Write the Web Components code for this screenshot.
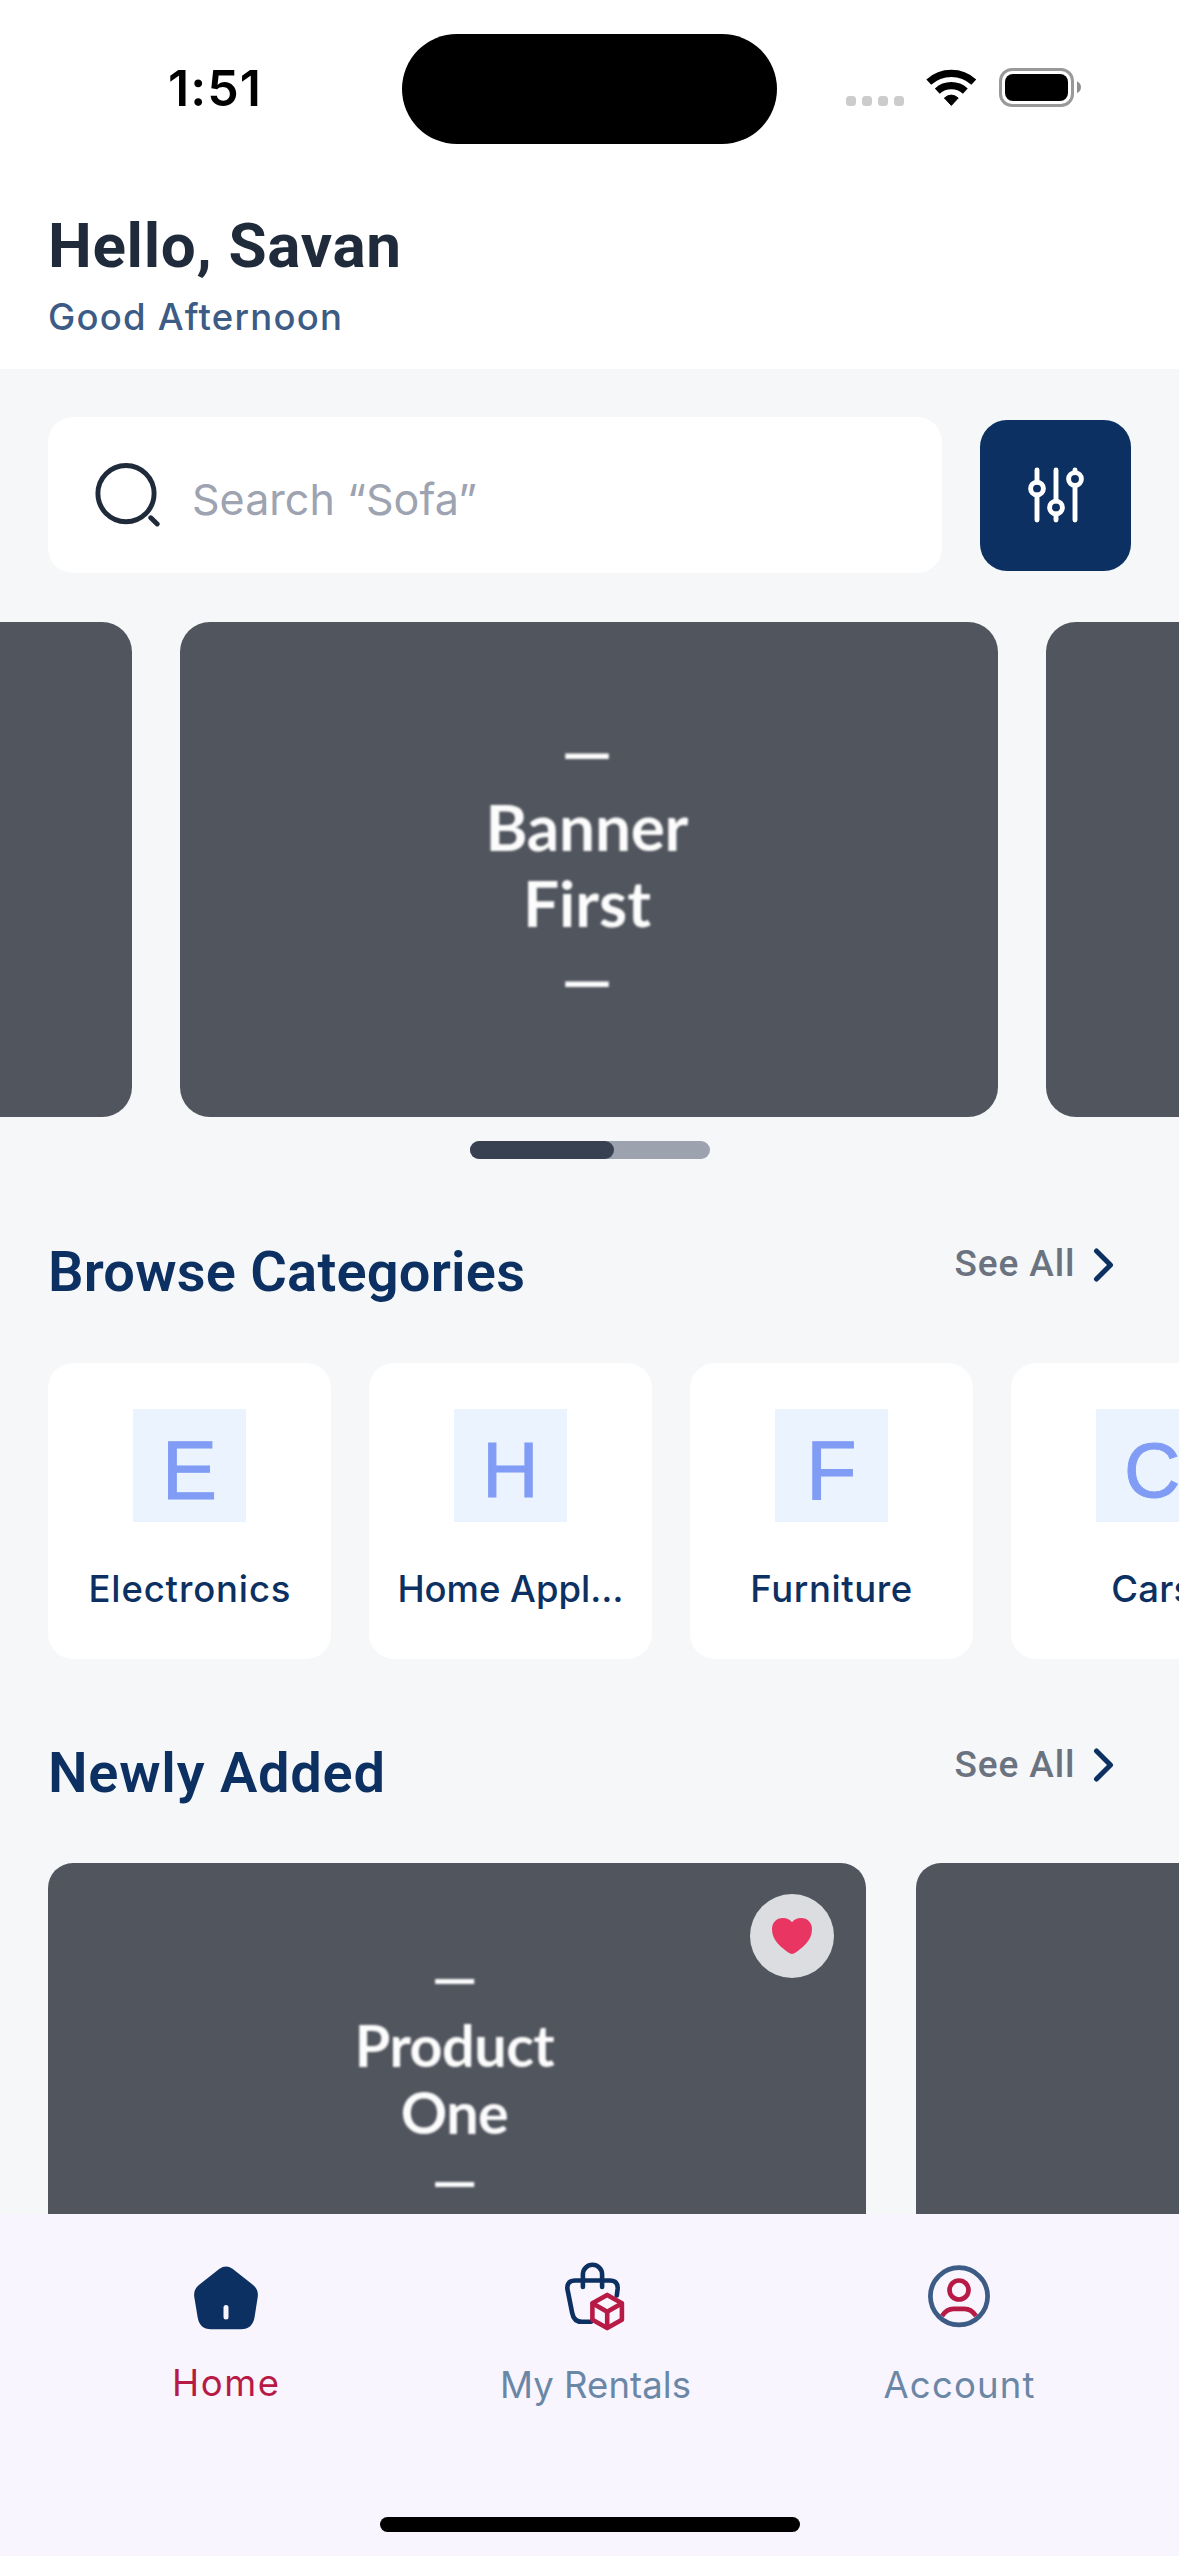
<!DOCTYPE html>
<html lang="en">
<head>
<meta charset="utf-8">
<title>Rentals</title>
<style>
html,body{margin:0;padding:0}
body{width:1179px;height:2556px;overflow:hidden;background:#f5f7f9;font-family:Inter,"Noto Sans",sans-serif}
</style>
</head>
<body>
<rental-app></rental-app>
<script>
function define(name, html, Base = HTMLElement) {
  const t = document.createElement('template');
  t.innerHTML = html;
  customElements.define(name, class extends Base {
    constructor() {
      super();
      this.attachShadow({mode: 'open'}).appendChild(t.content.cloneNode(true));
    }
  });
}

/* Single line of text tracked out to an exact width. */
customElements.define('fit-text', class extends HTMLElement {
  constructor() {
    super();
    this.attachShadow({mode: 'open'}).innerHTML = `
      <style>:host{display:block;white-space:nowrap}span{display:inline-block}</style><span><slot></slot></span>`;
  }
  connectedCallback() {
    requestAnimationFrame(() => this.fit());
    this.fit();
  }
  fit() {
    const w = +this.getAttribute('w');
    const span = this.shadowRoot.querySelector('span');
    const n = this.textContent.length;
    if (!w || n < 2) return;
    span.style.letterSpacing = '0px';
    span.style.marginRight = '0';
    const natural = span.getBoundingClientRect().width;
    if (!natural) return;
    const ls = (w - natural) / (n - 1);
    span.style.letterSpacing = ls + 'px';
    span.style.marginRight = -ls + 'px';
  }
});

define('status-bar', `
<style>
:host{display:grid;grid-template-columns:402px 375px 402px;height:177px;align-items:start;background:#fff}
.time{padding:58px 0 0 168px;font:600 50px/60px Inter,sans-serif;color:#000}
.island{margin-top:34px;height:110px;border-radius:55px;background:#000}
.icons{display:flex;padding:68px 0 0 69px;align-items:flex-start}
.dots{display:flex;gap:6px;padding-top:28px;margin-right:22px}
.dots i{width:10px;height:10px;border-radius:3.5px;background:#ccc}
svg{display:block}
.wifi{margin-right:22px}
</style>
<div class="time"><fit-text w="93">1:51</fit-text></div>
<div class="island"></div>
<div class="icons">
  <div class="dots"><i></i><i></i><i></i><i></i></div>
  <svg class="wifi" width="51" height="39" viewBox="0 0 51 39">
    <g fill="none" stroke="#000" stroke-width="7.2">
      <path d="M2.8 14.1A33.2 33.2 0 0 1 47.8 14.1"/>
      <path d="M11.3 23.1A20.8 20.8 0 0 1 39.3 23.1"/>
    </g>
    <path d="M18.4 30Q25.3 24.2 32.2 30L25.3 37.4Z" stroke="#000" stroke-width="1" stroke-linejoin="round"/>
  </svg>
  <svg width="83" height="39" viewBox="0 0 83 39">
    <rect x="1.5" y="1.5" width="72" height="36" rx="11.5" fill="none" stroke="#999" stroke-width="3"/>
    <rect x="6" y="6" width="63" height="27" rx="8" fill="#000"/>
    <path d="M78 13.3Q82 15.5 82 19.3Q82 23.1 78 25.3Z" fill="#8f8f8f"/>
  </svg>
</div>`);

define('greeting-header', `
<style>
:host{display:block;height:159px;padding:33px 48px 0;background:#fff}
.name{font:700 62px/72px Roboto,sans-serif;color:#1f2a3a}
.sub{margin-top:13px;font:500 36.5px/44px Inter,sans-serif;color:#3c5b85}
</style>
<div class="name"><fit-text w="353">Hello, Savan</fit-text></div>
<div class="sub"><fit-text w="294">Good Afternoon</fit-text></div>`);

define('search-bar', `
<style>
:host{display:flex;gap:38px;align-items:center;padding:48px 48px 0}
.box{display:flex;align-items:center;box-sizing:border-box;width:894px;height:156px;border-radius:25px;background:#fff;padding-left:46px}
.q{margin-left:32px;padding-top:7px;font:400 43px/52px Inter,sans-serif;color:#9da3b0}
.filter{width:151px;height:151px;border-radius:27px;background:#0c3061;display:flex;align-items:center;justify-content:center}
svg{display:block}
</style>
<div class="box">
  <svg width="66" height="66" viewBox="0 0 66 66" fill="none" stroke="#1f2a3a" stroke-width="4.9" stroke-linecap="round">
    <circle cx="32" cy="31.6" r="28.1"/><path d="M56.8 55.8L63.2 62"/>
  </svg>
  <div class="q"><fit-text w="285">Search “Sofa”</fit-text></div>
</div>
<div class="filter">
  <svg width="64" height="64" viewBox="0 0 64 64" fill="none" stroke="#fff" stroke-width="4.9" stroke-linecap="round">
    <path d="M13 7V19.2M13 32V57M32 7V38M32 51V57M51 7V9.6M51 22.4V57"/>
    <circle cx="13" cy="25.6" r="6.4"/><circle cx="32" cy="44.5" r="6.4"/><circle cx="51" cy="16" r="6.4"/>
  </svg>
</div>`);

define('photo-placeholder', `
<style>
:host{display:flex;flex:none;flex-direction:column;align-items:center;justify-content:center;background:#51555e;color:#fcfcfc;
font-family:Lato,sans-serif;font-weight:700;text-align:center}
div{display:flex;flex-direction:column;align-items:center;margin:-10px 0 0 -4px;filter:blur(.8px)}
</style>
<div><slot></slot></div>`);

define('banner-carousel', `
<style>
:host{display:block;padding-top:49.3px}
.track{display:flex;justify-content:center;gap:48px;margin-left:-1px}
photo-placeholder{width:818px;height:495px;border-radius:30px;font-size:64px;line-height:75.8px}
.pager{width:240px;height:18.5px;margin:23.6px auto 0;border-radius:10px;background:#9ca3af}
.pager i{display:block;width:144px;height:100%;border-radius:10px;background:#374151}
</style>
<div class="track">
  <photo-placeholder></photo-placeholder>
  <photo-placeholder><fit-text>—</fit-text><fit-text w="203">Banner</fit-text><fit-text w="128">First</fit-text><fit-text>—</fit-text></photo-placeholder>
  <photo-placeholder></photo-placeholder>
</div>
<div class="pager"><i></i></div>`);

define('section-header', `
<style>
:host{display:flex;justify-content:space-between;align-items:flex-start;height:66px;padding:0 65.500px 0 48px}
.title{font:560 56px/66px Roboto,sans-serif;color:#0c3061}
.all{display:flex;align-items:center;gap:17px;padding-top:3px;font:500 37px/44px Roboto,sans-serif;color:#6b7280}
svg{display:block;margin-top:1px}
</style>
<div class="title"><slot></slot></div>
<div class="all"><fit-text w="120">See All</fit-text>
  <svg width="22" height="36" viewBox="0 0 22 36" fill="none" stroke="#0c3061" stroke-width="5" stroke-linecap="round" stroke-linejoin="round"><path d="M4.5 4L18.5 18L4.5 32"/></svg>
</div>`);

define('category-card', `
<style>
:host{display:flex;flex:none;flex-direction:column;align-items:center;box-sizing:border-box;width:283px;height:296px;padding-top:46px;border-radius:25px;background:#fff}
.pic{display:flex;align-items:center;justify-content:center;width:113px;height:113px;background:#ebf3ff;color:#809cf5;font:400 var(--letter,83px)/113px "Liberation Sans",sans-serif}
.pic slot{display:block;padding-top:11px;-webkit-text-stroke:1px #809cf5}
.label{margin-top:45px;font:500 36.5px/44px Inter,sans-serif;color:#0c3061}
</style>
<div class="pic"><slot name="letter"></slot></div>
<div class="label"><slot></slot></div>`);

define('product-card', `
<style>
:host{display:block;flex:none;position:relative;width:817.500px;height:440px}
photo-placeholder{height:440px;border-radius:25px 25px 0 0;font-size:57.5px;line-height:67.5px}
.fav{position:absolute;top:31px;right:32px;width:84px;height:84px;border-radius:50%;background:#dcdde0;display:flex;align-items:center;justify-content:center}
svg{display:block}
</style>
<photo-placeholder><slot></slot></photo-placeholder>
<div class="fav"><svg width="42" height="38" viewBox="0 0 42 38"><path fill="#e83562" d="M21 5.2C23.4 2.2 26.6 1 30 1C36.6 1 41 5.8 41 12C41 24.500 31 30.500 24.600 35.600Q21 38.200 17.400 35.600C11 30.500 1 24.500 1 12C1 5.800 5.400 1 12 1C15.400 1 18.600 2.200 21 5.200Z"/></svg></div>`);

define('tab-item', `
<style>
:host{display:flex;flex-direction:column;align-items:center;flex:none;color:#6b87a6;font:400 36.5px/44px Inter,sans-serif}
.icon{height:72px;display:flex;align-items:flex-start}
.label{margin-top:30px}
</style>
<div class="icon"><slot name="icon"></slot></div>
<div class="label"><slot></slot></div>`);

define('tab-bar', `
<style>
:host{display:flex;flex-direction:column;align-items:center;height:342px;background:#f8f5ff}
.tabs{display:flex;width:1179px;height:303px;box-sizing:border-box;padding:46.5px 0 0 125.5px}
tab-item{width:200px}
.rentals{margin:0 163.5px 0 170px}
.home{color:#b81a46}
.home fit-text{margin-top:-2px}
svg{display:block}
.bar{width:420px;height:15px;border-radius:8px;background:#000}
</style>
<div class="tabs">
  <tab-item class="home">
    <svg slot="icon" width="64" height="70" viewBox="0 -5 64 70">
      <path fill="#0c3061" d="M25.500 2.800Q32 -1.800 38.500 2.800L58.500 18.500Q64.600 23 63.800 30.500L60.600 51Q58.600 63.200 47 63.200H17Q5.400 63.200 3.600 51L.2 30.500Q-.6 23 5.500 18.500Z"/>
      <path d="M32 41.500V51" stroke="#f8f5ff" stroke-width="5" stroke-linecap="round"/>
    </svg>
    <fit-text w="107">Home</fit-text>
  </tab-item>
  <tab-item class="rentals">
    <svg slot="icon" width="62" height="70" viewBox="0 -1.500 62 70" fill="none" stroke="#0c3061" stroke-width="4.600" stroke-linecap="round" stroke-linejoin="round">
      <path d="M17.900 24.400V11.900a9.600 9.600 0 0 1 19.200 0V24.400"/>
      <path d="M26 59.300H17Q8.800 59.300 7.200 50.500L2.400 26.500Q1.600 18 10.500 18H44.500Q53.400 18 52.600 26.500L51.800 33"/>
      <g stroke="#b81a46"><path fill="#f8f5ff" d="M42.200 32.400L56.900 40.700V57.300L42.200 65.600L27.400 57.300V40.700Z"/><path d="M27.800 41L42.200 49.300L56.600 41M42.200 49.300V65"/></g>
    </svg>
    <fit-text w="191">My Rentals</fit-text>
  </tab-item>
  <tab-item>
    <svg slot="icon" width="62" height="70" viewBox="0 -4.500 62 70" fill="none" stroke-width="4.700">
      <path stroke="#b81a46" d="M14 50.500Q18.500 43.300 25.500 43.300H36.500Q43.500 43.300 48 50.500"/>
      <circle stroke="#b81a46" cx="31" cy="24.500" r="9.500"/>
      <circle stroke="#3c5b85" cx="31" cy="30.800" r="28.600"/>
    </svg>
    <fit-text w="151">Account</fit-text>
  </tab-item>
</div>
<div class="bar"></div>`);

define('rental-app', `
<style>
:host{display:flex;flex-direction:column;width:1179px;height:2556px;overflow:hidden;background:#f5f7f9}
main{display:block;height:2214px;overflow:hidden;flex:none}
section{padding-top:80px}
section+section{padding-top:81px}
.row{display:flex;padding:57.500px 0 0 48px;overflow:hidden}
.cats{gap:37.900px}
.narrow{--letter:78px}
.prods{gap:50px}
</style>
<main>
  <status-bar></status-bar>
  <greeting-header></greeting-header>
  <search-bar></search-bar>
  <banner-carousel></banner-carousel>
  <section>
    <section-header><fit-text w="477">Browse Categories</fit-text></section-header>
    <div class="row cats">
      <category-card><span slot="letter">E</span><fit-text w="202">Electronics</fit-text></category-card>
      <category-card class="narrow"><span slot="letter">H</span><fit-text w="226">Home Appl…</fit-text></category-card>
      <category-card><span slot="letter">F</span><fit-text w="162">Furniture</fit-text></category-card>
      <category-card class="narrow"><span slot="letter">C</span><fit-text w="82">Cars</fit-text></category-card>
    </div>
  </section>
  <section>
    <section-header><fit-text w="337">Newly Added</fit-text></section-header>
    <div class="row prods">
      <product-card><fit-text>—</fit-text><fit-text w="200">Product</fit-text><fit-text w="108">One</fit-text><fit-text>—</fit-text></product-card>
      <product-card></product-card>
    </div>
  </section>
</main>
<tab-bar></tab-bar>`);
</script>
</body>
</html>
